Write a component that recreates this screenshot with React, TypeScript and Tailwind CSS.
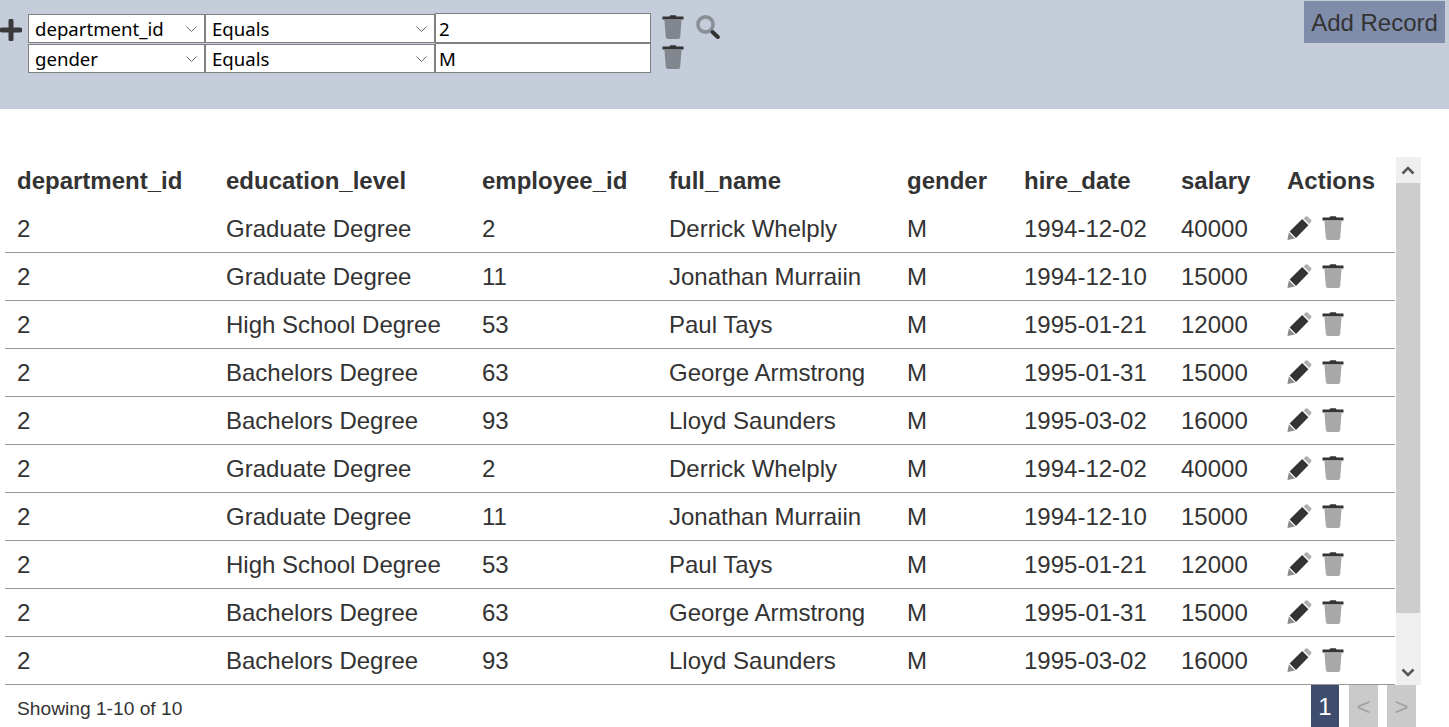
const rows = [
  ["2", "Graduate Degree", "2", "Derrick Whelply", "M", "1994-12-02", "40000"],
  ["2", "Graduate Degree", "11", "Jonathan Murraiin", "M", "1994-12-10", "15000"],
  ["2", "High School Degree", "53", "Paul Tays", "M", "1995-01-21", "12000"],
  ["2", "Bachelors Degree", "63", "George Armstrong", "M", "1995-01-31", "15000"],
  ["2", "Bachelors Degree", "93", "Lloyd Saunders", "M", "1995-03-02", "16000"],
  ["2", "Graduate Degree", "2", "Derrick Whelply", "M", "1994-12-02", "40000"],
  ["2", "Graduate Degree", "11", "Jonathan Murraiin", "M", "1994-12-10", "15000"],
  ["2", "High School Degree", "53", "Paul Tays", "M", "1995-01-21", "12000"],
  ["2", "Bachelors Degree", "63", "George Armstrong", "M", "1995-01-31", "15000"],
  ["2", "Bachelors Degree", "93", "Lloyd Saunders", "M", "1995-03-02", "16000"],
];

const headers = ["department_id", "education_level", "employee_id", "full_name", "gender", "hire_date", "salary", "Actions"];

function TrashIcon({ body }: { body: string }) {
  return (
    <svg width="22" height="24" viewBox="0 0 22 24">
      <path d="M7.5 1.6 L8.3 .3 H13.7 L14.5 1.6 H21.5 V4.6 H.5 V1.6 Z" fill="#333" />
      <path d="M2.4 4.6 H19.6 L18.2 22 Q18 24 16 24 H6 Q4 24 3.8 22 Z" fill={body} />
    </svg>
  );
}

function PencilIcon() {
  return (
    <svg width="25" height="24" viewBox="0 0 25 24">
      <path d="M.4 24 L1.8 16.6 L4.8 19.6 L8 22.6 Z" fill="#8a8a8a" />
      <path d="M2.6 15.4 L15.2 3 L21.4 9.2 L9 22 Z" fill="#333" />
      <path d="M16.6 2.4 L18.6 .5 Q19.8 -.3 20.9 .7 L24 3.8 Q24.9 5 24 6.1 L22.2 8 Z" fill="#b0b0b0" />
    </svg>
  );
}

function SearchIcon() {
  return (
    <svg width="24" height="24" viewBox="0 0 24 24">
      <circle cx="9.5" cy="9.5" r="7.6" fill="none" stroke="#8b8f98" strokeWidth="3.6" />
      <path d="M16.5 17 L21.8 22" stroke="#333" strokeWidth="4" strokeLinecap="round" />
    </svg>
  );
}

function PlusIcon() {
  return (
    <svg width="22" height="22" viewBox="0 0 22 22">
      <path d="M11 2 V20 M2 11 H20" stroke="#3a3a3a" strokeWidth="5" strokeLinecap="round" />
    </svg>
  );
}

function FilterSelect({ value, width }: { value: string; width: string }) {
  return (
    <div className={`relative h-[29px] ${width}`}>
      <select
        defaultValue={value}
        className="h-full w-full appearance-none border border-[#808080] bg-white pl-[6px] text-[18.6px] text-black outline-none"
      >
        <option>{value}</option>
      </select>
      <svg className="absolute right-[8px] top-[12px]" width="11" height="6" viewBox="0 0 11 6">
        <path d="M.5 .5 L5.5 5.5 L10.5 .5" fill="none" stroke="#666" strokeWidth="1" />
      </svg>
    </div>
  );
}

function FilterRow({ field, val, search }: { field: string; val: string; search?: boolean }) {
  return (
    <div className="flex h-[30px] items-end">
      <FilterSelect value={field} width="w-[177px]" />
      <FilterSelect value="Equals" width="w-[230px]" />
      <input
        defaultValue={val}
        className="h-[30px] w-[216px] border border-[#808080] bg-white pl-[3px] text-[18.6px] text-black outline-none"
      />
      <div className="mb-[4px] ml-[11px] flex">
        <TrashIcon body="#81868f" />
      </div>
      {search && (
        <div className="mb-[4px] ml-[12px] flex">
          <SearchIcon />
        </div>
      )}
    </div>
  );
}

export default function App() {
  return (
    <div className="h-[727px] w-[1449px] overflow-hidden bg-white font-['Liberation_Sans',Arial,sans-serif] text-[#333]">
      <div className="flex h-[109px] justify-between bg-[#c5cddb]">
        <div className="flex items-start pt-[13px] font-['Noto_Sans',sans-serif]">
          <div className="mr-[6px] mt-[6px]">
            <PlusIcon />
          </div>
          <div className="flex flex-col">
            <FilterRow field="department_id" val="2" search />
            <FilterRow field="gender" val="M" />
          </div>
        </div>
        <button className="mr-[4px] mt-[1px] h-[42px] w-[141px] bg-[#7f8dab] pt-[2px] text-[24px] text-[#333]">Add Record</button>
      </div>

      <div className="mt-[48px] flex h-[528px] pl-[5px]">
        <table className="w-[1390px] table-fixed border-separate border-spacing-0 text-[24px] leading-[28px]">
          <colgroup>
            <col className="w-[209px]" />
            <col className="w-[256px]" />
            <col className="w-[187px]" />
            <col className="w-[238px]" />
            <col className="w-[117px]" />
            <col className="w-[157px]" />
            <col className="w-[106px]" />
            <col className="w-[120px]" />
          </colgroup>
          <thead>
            <tr className="h-[48px]">
              {headers.map((h) => (
                <th key={h} className="whitespace-nowrap px-[12px] text-left font-bold">
                  {h}
                </th>
              ))}
            </tr>
          </thead>
          <tbody>
            {rows.map((row, i) => (
              <tr key={i} className="h-[48px]">
                {row.map((cell, j) => (
                  <td key={j} className="whitespace-nowrap border-b border-[#999] px-[12px]">
                    {cell}
                  </td>
                ))}
                <td className="border-b border-[#999] px-[12px]">
                  <div className="mb-[2px] flex items-center gap-[10px]">
                    <PencilIcon />
                    <TrashIcon body="#a8a8a8" />
                  </div>
                </td>
              </tr>
            ))}
          </tbody>
        </table>
        <div className="ml-px flex h-[528px] w-[25px] flex-col bg-[#efefef]">
          <div className="flex h-[26px] w-[24px] items-center justify-center">
            <svg width="14" height="9" viewBox="0 0 14 9">
              <path d="M1.5 7.5 L7 2 L12.5 7.5" fill="none" stroke="#555" strokeWidth="2.5" />
            </svg>
          </div>
          <div className="h-[430px] w-[24px] bg-[#cdcdcd]" />
          <div className="flex w-[24px] flex-1 items-end justify-center pb-[8px]">
            <svg width="14" height="9" viewBox="0 0 14 9">
              <path d="M1.5 1.5 L7 7 L12.5 1.5" fill="none" stroke="#555" strokeWidth="2.5" />
            </svg>
          </div>
        </div>
      </div>

      <div className="flex h-[42px] items-start justify-between pl-[17px] pr-[33px]">
        <span className="mt-[12px] text-[19.2px] leading-[23px]">Showing 1-10 of 10</span>
        <div className="flex">
          <button className="h-[42px] w-[28px] bg-[#3e4c6d] pt-[2px] text-[24px] text-white">1</button>
          <button className="ml-[10px] h-[42px] w-[29px] bg-[#cacaca] pt-[2px] text-[24px] text-[#a3a3a3]">&lt;</button>
          <button className="ml-[9px] h-[42px] w-[29px] bg-[#cacaca] pt-[2px] text-[24px] text-[#a3a3a3]">&gt;</button>
        </div>
      </div>
    </div>
  );
}
